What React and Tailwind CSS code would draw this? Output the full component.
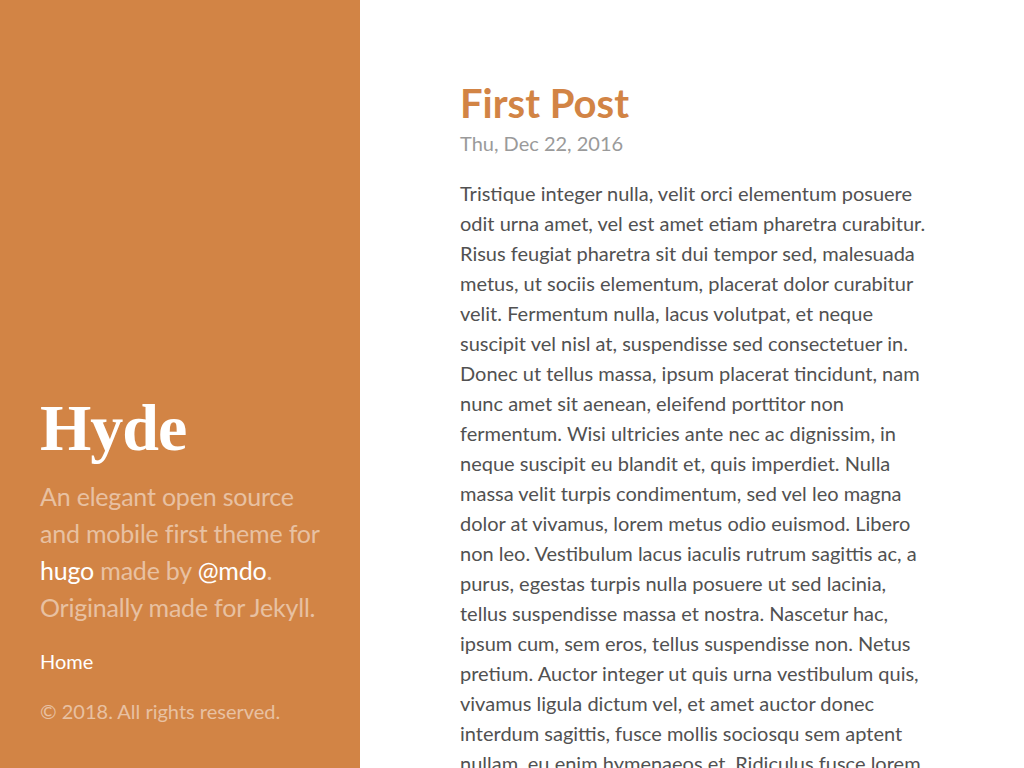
const BODY =
  "Tristique integer nulla, velit orci elementum posuere odit urna amet, vel est amet etiam pharetra curabitur. Risus feugiat pharetra sit dui tempor sed, malesuada metus, ut sociis elementum, placerat dolor curabitur velit. Fermentum nulla, lacus volutpat, et neque suscipit vel nisl at, suspendisse sed consectetuer in. Donec ut tellus massa, ipsum placerat tincidunt, nam nunc amet sit aenean, eleifend porttitor non fermentum. Wisi ultricies ante nec ac dignissim, in neque suscipit eu blandit et, quis imperdiet. Nulla massa velit turpis condimentum, sed vel leo magna dolor at vivamus, lorem metus odio euismod. Libero non leo. Vestibulum lacus iaculis rutrum sagittis ac, a purus, egestas turpis nulla posuere ut sed lacinia, tellus suspendisse massa et nostra. Nascetur hac, ipsum cum, sem eros, tellus suspendisse non. Netus pretium. Auctor integer ut quis urna vestibulum quis, vivamus ligula dictum vel, et amet auctor donec interdum sagittis, fusce mollis sociosqu sem aptent nullam, eu enim hymenaeos et. Ridiculus fusce lorem quis, tempus nulla eros, sed feugiat ut.";

export default function App() {
  return (
    <div className="flex h-screen overflow-hidden bg-white font-['Lato',sans-serif] text-[20px] leading-[30px]">
      {/* Sidebar */}
      <aside className="w-[360px] shrink-0 bg-[#d28445] flex flex-col justify-end px-10 pb-[42px] text-white/50">
        <h1 className="font-['Liberation_Serif',serif] font-bold text-[66px] leading-[80px] text-white tracking-[-1px]">
          Hyde
        </h1>
        <p className="mt-[10px] text-[25px] leading-[37px] tracking-[-0.2px]">
          An elegant open source and mobile first theme for{" "}
          <a className="text-white">hugo</a> made by <a className="text-white">@mdo</a>. Originally made for
          Jekyll.
        </p>
        <nav className="mt-[18px] leading-[35px] text-white">
          <a>Home</a>
        </nav>
        <p className="mt-[17px]">© 2018. All rights reserved.</p>
      </aside>

      {/* Content */}
      <main className="pl-[100px] pt-[78px]">
        <div className="w-[466px]">
          <h1 className="text-[40px] leading-[50px] font-bold text-[#d28445]">First Post</h1>
          <span className="block text-[#9a9a9a]">Thu, Dec 22, 2016</span>
          <p className="mt-[20px] text-[#515151]">{BODY}</p>
        </div>
      </main>
    </div>
  );
}
